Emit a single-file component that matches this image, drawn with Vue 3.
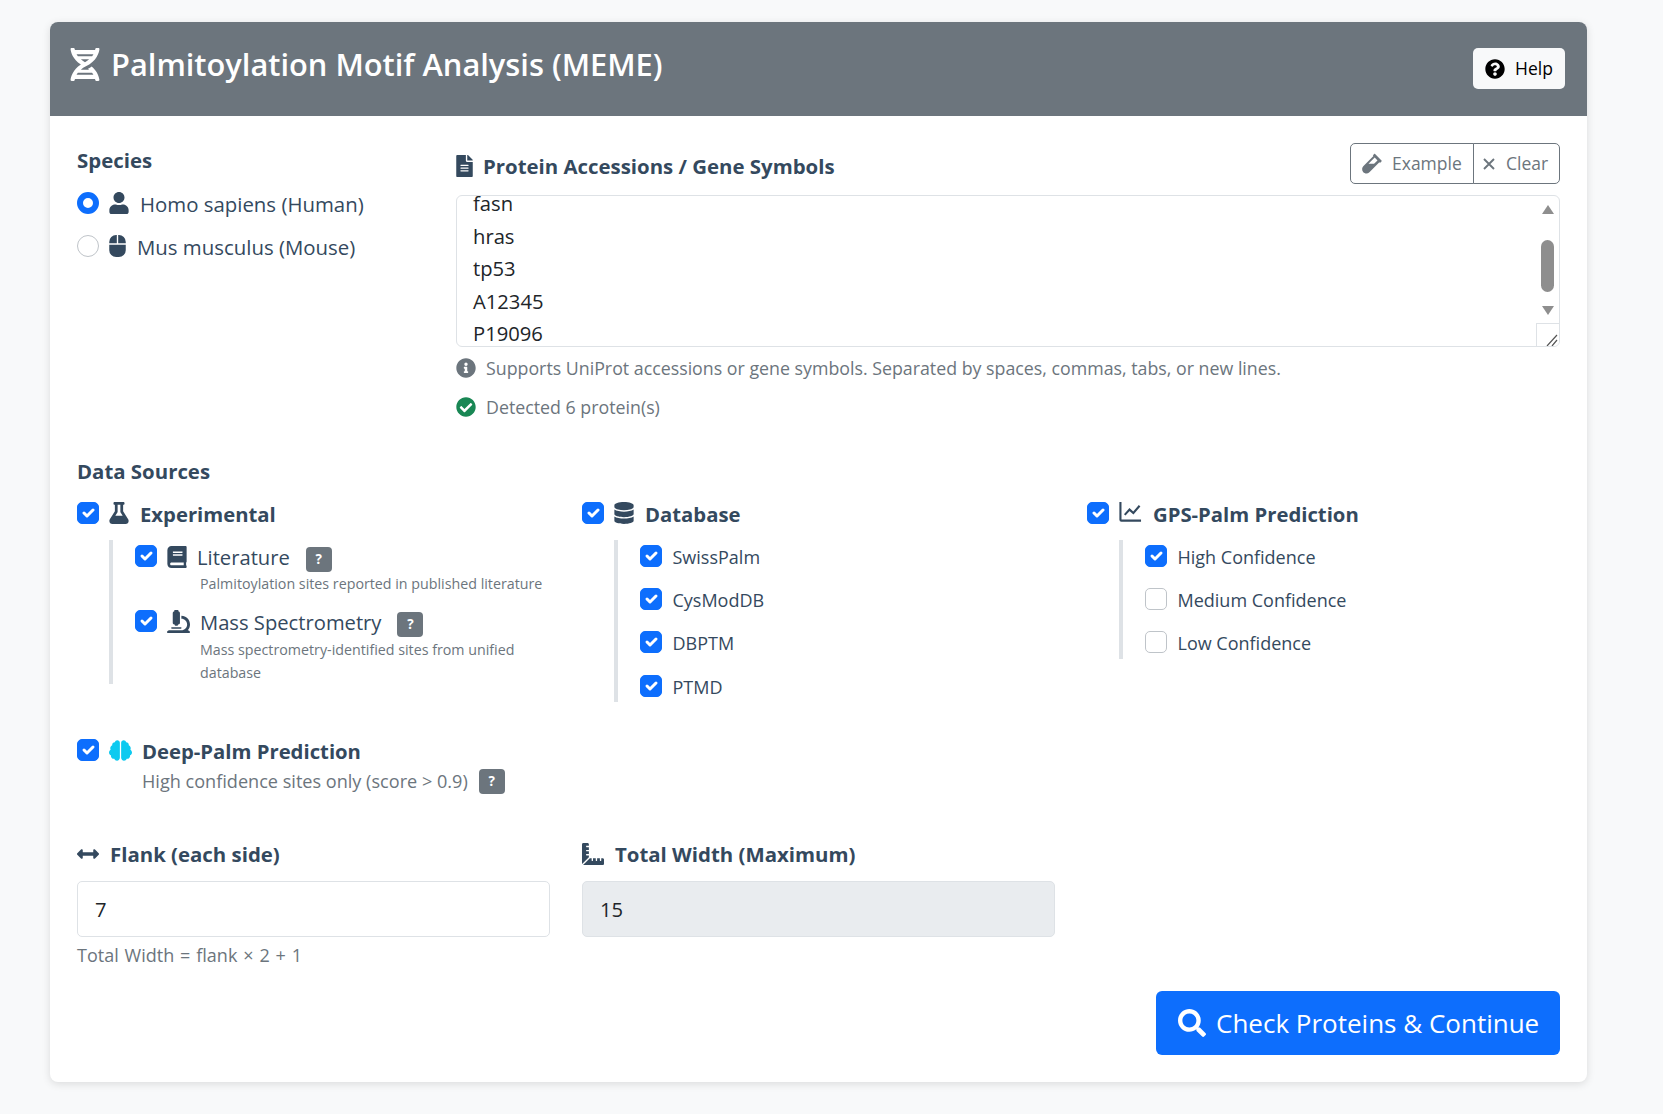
<template>
  <div class="page">
    <div class="card">
      <div class="card-header">
        <h4 class="title">
          <svg class="ic ic-dna" :viewBox="icons.dna[0]"><path :d="icons.dna[1]" /></svg>
          Palmitoylation Motif Analysis (MEME)
        </h4>
        <button class="btn-help">
          <svg class="ic ic-help" :viewBox="icons.question[0]"><path :d="icons.question[1]" /></svg>
          Help
        </button>
      </div>

      <div class="card-body">
        <div class="top-row">
          <div class="species">
            <div class="label species-label">Species</div>
            <label class="radio-row">
              <input v-model="species" type="radio" value="human" class="radio" />
              <svg class="ic ic-user" :viewBox="icons.user[0]"><path :d="icons.user[1]" /></svg>
              <span class="radio-text">Homo sapiens (Human)</span>
            </label>
            <label class="radio-row">
              <input v-model="species" type="radio" value="mouse" class="radio" />
              <svg class="ic ic-mouse" :viewBox="icons.mouse[0]"><path :d="icons.mouse[1]" /></svg>
              <span class="radio-text">Mus musculus (Mouse)</span>
            </label>
          </div>

          <div class="accessions">
            <div class="acc-head">
              <div class="label acc-label">
                <svg class="ic ic-file" :viewBox="icons.file[0]"><path :d="icons.file[1]" /></svg>
                Protein Accessions / Gene Symbols
              </div>
              <div class="btn-group">
                <button class="btn-outline btn-example">
                  <svg class="ic ic-vial" :viewBox="icons.vial[0]"><path fill-rule="evenodd" :d="icons.vial[1]" /></svg>
                  Example
                </button>
                <button class="btn-outline btn-clear" @click="accessions = ''">
                  <svg class="ic-x" viewBox="0 0 12 12"><path d="M1 1l10 10M11 1L1 11" /></svg>
                  Clear
                </button>
              </div>
            </div>
            <div class="textarea-wrap">
              <textarea ref="textareaEl" v-model="accessions" class="textarea"></textarea>
              <div class="scrollbar">
                <span class="arrow arrow-up"></span>
                <span class="thumb"></span>
                <span class="arrow arrow-down"></span>
              </div>
              <div class="resizer">
                <svg viewBox="0 0 22 22"><path d="M10 22L20 11M15 22l5-6" /></svg>
              </div>
            </div>
            <div class="hint hint-first">
              <svg class="ic ic-hint" :viewBox="icons.info[0]"><path :d="icons.info[1]" /></svg>
              Supports UniProt accessions or gene symbols. Separated by spaces, commas, tabs, or new lines.
            </div>
            <div class="hint hint-second">
              <svg class="ic ic-hint ic-ok" :viewBox="icons.checkCircle[0]"><path :d="icons.checkCircle[1]" /></svg>
              Detected {{ proteinCount }} protein(s)
            </div>
          </div>
        </div>

        <div class="label sources-label">Data Sources</div>
        <div class="sources">
          <div class="source-col">
            <label class="source-head">
              <input v-model="exp.all" type="checkbox" class="check" />
              <svg class="ic ic-flask" :viewBox="icons.flask[0]"><path :d="icons.flask[1]" /></svg>
              <span class="source-name">Experimental</span>
            </label>
            <div class="source-list exp-list">
              <div class="exp-item">
                <label class="sub-row">
                  <input v-model="exp.literature" type="checkbox" class="check" />
                  <svg class="ic ic-book" :viewBox="icons.book[0]"><path :d="icons.book[1]" /></svg>
                  <span class="exp-name">Literature</span>
                  <span class="badge badge-lit">?</span>
                </label>
                <div class="desc">Palmitoylation sites reported in published literature</div>
              </div>
              <div class="exp-item">
                <label class="sub-row">
                  <input v-model="exp.ms" type="checkbox" class="check" />
                  <svg class="ic ic-micro" :viewBox="icons.microscope[0]"><path :d="icons.microscope[1]" /></svg>
                  <span class="exp-name">Mass Spectrometry</span>
                  <span class="badge badge-ms">?</span>
                </label>
                <div class="desc">Mass spectrometry-identified sites from unified<br />database</div>
              </div>
            </div>
          </div>

          <div class="source-col">
            <label class="source-head">
              <input v-model="dbAll" type="checkbox" class="check" />
              <svg class="ic ic-db" :viewBox="icons.database[0]"><path :d="icons.database[1]" /></svg>
              <span class="source-name">Database</span>
            </label>
            <div class="source-list">
              <label v-for="item in databases" :key="item.name" class="sub-row">
                <input v-model="item.on" type="checkbox" class="check" />
                <span class="sub-name">{{ item.name }}</span>
              </label>
            </div>
          </div>

          <div class="source-col">
            <label class="source-head">
              <input v-model="gpsAll" type="checkbox" class="check" />
              <svg class="ic-chart" viewBox="0 0 24 24"><path d="M1.5 2v18.500a1 1 0 0 0 1 1H23M6 15.500l5-5.500 4 3.500L21.500 6" /></svg>
              <span class="source-name">GPS-Palm Prediction</span>
            </label>
            <div class="source-list">
              <label v-for="item in confidence" :key="item.name" class="sub-row">
                <input v-model="item.on" type="checkbox" class="check" />
                <span class="sub-name">{{ item.name }}</span>
              </label>
            </div>
          </div>
        </div>

        <label class="deep-row">
          <input v-model="deepPalm" type="checkbox" class="check" />
          <svg class="ic ic-brain" :viewBox="icons.brain[0]"><path :d="icons.brain[1]" /></svg>
          <span class="source-name">Deep-Palm Prediction</span>
        </label>
        <div class="deep-sub">
          High confidence sites only (score &gt; 0.9)
          <span class="badge badge-deep">?</span>
        </div>

        <div class="flank-row">
          <div>
            <div class="label field-label">
              <svg class="ic ic-arrows" :viewBox="icons.arrows[0]"><path :d="icons.arrows[1]" /></svg>
              Flank (each side)
            </div>
            <input v-model="flank" class="field" type="text" />
            <div class="field-help">Total Width = flank × 2 + 1</div>
          </div>
          <div>
            <div class="label field-label">
              <svg class="ic ic-ruler" :viewBox="icons.ruler[0]"><path :d="icons.ruler[1]" /></svg>
              Total Width (Maximum)
            </div>
            <input :value="flank * 2 + 1" class="field field-disabled" type="text" disabled />
          </div>
        </div>

        <div class="submit-row">
          <button class="btn-submit">
            <svg class="ic ic-search" :viewBox="icons.search[0]"><path :d="icons.search[1]" /></svg>
            Check Proteins &amp; Continue
          </button>
        </div>
      </div>
    </div>
  </div>
</template>

<script setup>
import { ref, reactive, computed, onMounted } from 'vue';

const species = ref('human');
const accessions = ref('egfr\nfasn\nhras\ntp53\nA12345\nP19096');
const textareaEl = ref(null);
const flank = ref(7);
const dbAll = ref(true);
const gpsAll = ref(true);
const deepPalm = ref(true);
const exp = reactive({ all: true, literature: true, ms: true });

const databases = reactive([
  { name: 'SwissPalm', on: true },
  { name: 'CysModDB', on: true },
  { name: 'DBPTM', on: true },
  { name: 'PTMD', on: true },
]);
const confidence = reactive([
  { name: 'High Confidence', on: true },
  { name: 'Medium Confidence', on: false },
  { name: 'Low Confidence', on: false },
]);

const proteinCount = computed(() => accessions.value.split(/[\s,]+/).filter(Boolean).length);

// the reference shows the textarea scrolled a little
onMounted(() => {
  textareaEl.value.scrollTop = 49;
});

const icons = {
  dna: ['0 0 448 512', 'M.1 494.1c-1.1 9.5 6.3 17.8 15.9 17.8l32.3.1c8.1 0 14.9-5.9 16-13.9.7-4.9 1.8-11.1 3.4-18.1H380c1.6 6.9 2.7 13.1 3.4 18.1 1.1 8 7.9 13.9 16 13.9l32.3-.1c9.6 0 17-8.3 15.9-17.8-4.6-37.9-25.6-129-118.9-207.7-17.6 12.4-37.1 24.2-58.5 35.4 6.2 4.6 11.4 9.4 17 14.2H159.7c21.3-18.1 47-35.6 78.7-51.4C410.5 199.1 442.1 65.8 447.9 17.9 449 8.4 441.6.1 432 .1L399.6 0c-8.1 0-14.9 5.9-16 13.9-.7 4.9-1.8 11.1-3.4 18.1H67.8c-1.6-7-2.7-13.1-3.4-18.1-1.1-8-7.9-13.9-16-13.9L16.1.1C6.5.1-.9 8.4.2 17.9 5.3 60.8 31.4 171.8 160 256 31.5 340.2 5.3 451.2.1 494.1zM224 219.6c-25.1-13.7-46.4-28.4-64.3-43.6h128.5c-17.8 15.2-39.1 30-64.2 43.6zM355.1 96c-5.8 10.4-12.8 21.1-21 32H114c-8.3-10.9-15.3-21.6-21-32h262.1zM92.9 416c5.8-10.4 12.8-21.1 21-32h219.4c8.3 10.9 15.4 21.6 21.2 32H92.9z'],
  question: ['0 0 512 512', 'M504 256c0 136.997-111.043 248-248 248S8 392.997 8 256C8 119.083 119.043 8 256 8s248 111.083 248 248zM262.655 90c-54.497 0-89.255 22.957-116.549 63.758-3.536 5.286-2.353 12.415 2.715 16.258l34.699 26.31c5.205 3.947 12.621 3.008 16.665-2.122 17.864-22.658 30.113-35.797 57.303-35.797 20.429 0 45.698 13.148 45.698 32.958 0 14.976-12.363 22.667-32.534 33.976C247.128 238.528 216 254.941 216 296v4c0 6.627 5.373 12 12 12h56c6.627 0 12-5.373 12-12v-1.333c0-28.462 83.186-29.647 83.186-106.667 0-58.002-60.165-102-116.531-102zM256 338c-25.365 0-46 20.635-46 46 0 25.364 20.635 46 46 46s46-20.636 46-46c0-25.365-20.635-46-46-46z'],
  user: ['0 0 448 512', 'M224 256c70.7 0 128-57.3 128-128S294.7 0 224 0 96 57.3 96 128s57.3 128 128 128zm89.6 32h-16.7c-22.2 10.2-46.9 16-72.9 16s-50.6-5.8-72.9-16h-16.7C60.2 288 0 348.2 0 422.4V464c0 26.5 21.5 48 48 48h352c26.5 0 48-21.5 48-48v-41.6c0-74.2-60.2-134.4-134.4-134.4z'],
  mouse: ['0 0 384 512', 'M0 352a160 160 0 0 0 160 160h64a160 160 0 0 0 160-160V224H0zM176 0h-16A160 160 0 0 0 0 160v32h176zm48 0h-16v192h176v-32A160 160 0 0 0 224 0z'],
  file: ['0 0 384 512', 'M224 136V0H24C10.7 0 0 10.7 0 24v464c0 13.3 10.7 24 24 24h336c13.3 0 24-10.7 24-24V160H248c-13.2 0-24-10.8-24-24zm64 236c0 6.6-5.4 12-12 12H108c-6.6 0-12-5.4-12-12v-8c0-6.6 5.4-12 12-12h168c6.6 0 12 5.4 12 12v8zm0-64c0 6.6-5.4 12-12 12H108c-6.6 0-12-5.4-12-12v-8c0-6.6 5.4-12 12-12h168c6.6 0 12 5.4 12 12v8zm0-72v8c0 6.6-5.4 12-12 12H108c-6.6 0-12-5.4-12-12v-8c0-6.6 5.4-12 12-12h168c6.6 0 12 5.4 12 12zm96-114.1v6.1H256V0h6.1c6.4 0 12.5 2.5 17 7l97.9 98c4.5 4.5 7 10.6 7 16.9z'],
  vial: ['0 0 480 512', 'M477.7 186.1L309.5 18.3c-3.1-3.1-8.2-3.1-11.3 0l-34 33.9c-3.1 3.1-3.1 8.2 0 11.3l11.2 11.1L33 316.5c-38.8 38.7-45.1 103-9.4 144.6 20.6 24.1 50.1 36.6 79.5 36.6 26.6 0 53.2-10.1 73.6-30.4l242.4-241.8 11.2 11.1c3.1 3.1 8.2 3.1 11.3 0l34-33.9c3.1-3.1 3.1-8.2 0-11.3zM306 112l68 68-84 84H154z'],
  info: ['0 0 512 512', 'M256 8C119.043 8 8 119.083 8 256c0 136.997 111.043 248 248 248s248-111.003 248-248C504 119.083 392.957 8 256 8zm0 110c23.196 0 42 18.804 42 42s-18.804 42-42 42-42-18.804-42-42 18.804-42 42-42zm56 254c0 6.627-5.373 12-12 12h-88c-6.627 0-12-5.373-12-12v-24c0-6.627 5.373-12 12-12h12v-64h-12c-6.627 0-12-5.373-12-12v-24c0-6.627 5.373-12 12-12h64c6.627 0 12 5.373 12 12v100h12c6.627 0 12 5.373 12 12v24z'],
  checkCircle: ['0 0 512 512', 'M504 256c0 136.967-111.033 248-248 248S8 392.967 8 256 119.033 8 256 8s248 111.033 248 248zM227.314 387.314l184-184c6.248-6.248 6.248-16.379 0-22.627l-22.627-22.627c-6.248-6.249-16.379-6.249-22.628 0L216 308.118l-70.059-70.059c-6.248-6.248-16.379-6.248-22.628 0l-22.627 22.627c-6.248 6.248-6.248 16.379 0 22.627l104 104c6.249 6.249 16.379 6.249 22.628.001z'],
  flask: ['0 0 448 512', 'M437.2 403.5L320 215V64h8c13.3 0 24-10.7 24-24V24c0-13.3-10.7-24-24-24H120c-13.3 0-24 10.7-24 24v16c0 13.3 10.7 24 24 24h8v151L10.8 403.5C-18.5 450.6 15.3 512 70.9 512h306.2c55.7 0 89.4-61.5 60.1-108.5zM137.9 320l48.2-77.6c3.7-5.2 5.8-11.6 5.8-18.4V64h64v160c0 6.9 2.2 13.2 5.8 18.4l48.2 77.6h-172z'],
  book: ['0 0 448 512', 'M448 360V24c0-13.3-10.7-24-24-24H96C43 0 0 43 0 96v320c0 53 43 96 96 96h328c13.3 0 24-10.7 24-24v-16c0-7.5-3.5-14.3-8.9-18.7-4.2-15.4-4.2-59.3 0-74.7 5.4-4.3 8.9-11.1 8.9-18.6zM128 134c0-3.3 2.7-6 6-6h212c3.3 0 6 2.7 6 6v20c0 3.3-2.7 6-6 6H134c-3.3 0-6-2.7-6-6v-20zm0 64c0-3.3 2.7-6 6-6h212c3.3 0 6 2.7 6 6v20c0 3.3-2.7 6-6 6H134c-3.3 0-6-2.7-6-6v-20zm253.4 250H96c-17.7 0-32-14.3-32-32 0-17.6 14.4-32 32-32h285.4c-1.9 17.1-1.9 46.9 0 64z'],
  microscope: ['0 0 512 512', 'M160 320h12v16c0 8.84 7.16 16 16 16h40c8.84 0 16-7.16 16-16v-16h12c17.67 0 32-14.33 32-32V64c0-17.67-14.33-32-32-32V16c0-8.84-7.16-16-16-16h-64c-8.84 0-16 7.16-16 16v16c-17.67 0-32 14.33-32 32v224c0 17.67 14.33 32 32 32zm304 128h-1.29C493.24 413.99 512 369.2 512 320c0-105.88-86.12-192-192-192v64c70.58 0 128 57.42 128 128s-57.42 128-128 128H48c-26.51 0-48 21.49-48 48 0 8.84 7.16 16 16 16h480c8.84 0 16-7.16 16-16 0-26.51-21.49-48-48-48zm-360-32h208c4.42 0 8-3.58 8-8v-16c0-4.42-3.58-8-8-8H104c-4.42 0-8 3.58-8 8v16c0 4.42 3.58 8 8 8z'],
  database: ['0 0 448 512', 'M448 73.143v45.714C448 159.143 347.667 192 224 192S0 159.143 0 118.857V73.143C0 32.857 100.333 0 224 0s224 32.857 224 73.143zM448 176v102.857C448 319.143 347.667 352 224 352S0 319.143 0 278.857V176c48.125 33.143 136.208 48.572 224 48.572S399.874 209.143 448 176zm0 160v102.857C448 479.143 347.667 512 224 512S0 479.143 0 438.857V336c48.125 33.143 136.208 48.572 224 48.572S399.874 369.143 448 336z'],
  brain: ['0 0 576 512', 'M208 0c-29.9 0-54.7 20.5-61.8 48.2-.8 0-1.4-.2-2.2-.2-35.3 0-64 28.7-64 64 0 4.8.6 9.5 1.7 14C52.5 138 32 166.6 32 200c0 12.6 3.2 24.3 8.3 34.9C16.3 248.7 0 274.3 0 304c0 33.3 20.4 61.9 49.4 73.9-.9 4.6-1.4 9.3-1.4 14.1 0 39.8 32.2 72 72 72 4.1 0 8.1-.5 12-1.2 9.6 28.5 36.2 49.2 68 49.2 39.8 0 72-32.2 72-72V64c0-35.3-28.7-64-64-64zm368 304c0-29.7-16.3-55.3-40.3-69.1 5.2-10.6 8.3-22.3 8.3-34.9 0-33.4-20.5-62-49.7-74 1-4.5 1.7-9.2 1.7-14 0-35.3-28.7-64-64-64-.8 0-1.5.2-2.2.2C422.7 20.5 397.9 0 368 0c-35.3 0-64 28.6-64 64v376c0 39.8 32.2 72 72 72 31.8 0 58.4-20.7 68-49.2 3.9.7 7.9 1.2 12 1.2 39.8 0 72-32.2 72-72 0-4.8-.5-9.5-1.4-14.1 29-12 49.4-40.6 49.4-73.9z'],
  arrows: ['0 0 512 512', 'M377.941 169.941V216H134.059v-46.059c0-21.382-25.851-32.09-40.971-16.971L7.029 239.029c-9.373 9.373-9.373 24.568 0 33.941l86.059 86.059c15.119 15.119 40.971 4.411 40.971-16.971V296h243.882v46.059c0 21.382 25.851 32.09 40.971 16.971l86.059-86.059c9.373-9.373 9.373-24.568 0-33.941l-86.059-86.059c-15.119-15.12-40.971-4.412-40.971 16.97z'],
  ruler: ['0 0 512 512', 'M160 288h-56c-4.42 0-8-3.58-8-8v-16c0-4.42 3.58-8 8-8h56v-64h-56c-4.42 0-8-3.58-8-8v-16c0-4.42 3.58-8 8-8h56V96h-56c-4.42 0-8-3.58-8-8V72c0-4.42 3.58-8 8-8h56V32c0-17.67-14.33-32-32-32H32C14.33 0 0 14.33 0 32v448c0 2.77.91 5.24 1.57 7.8L160 329.38V288zm320 64h-32v56c0 4.42-3.58 8-8 8h-16c-4.42 0-8-3.58-8-8v-56h-64v56c0 4.42-3.58 8-8 8h-16c-4.42 0-8-3.58-8-8v-56h-64v56c0 4.42-3.58 8-8 8h-16c-4.42 0-8-3.58-8-8v-56h-41.37L24.2 510.43c2.56.66 5.04 1.57 7.8 1.57h448c17.67 0 32-14.33 32-32v-96c0-17.67-14.33-32-32-32z'],
  search: ['0 0 512 512', 'M505 442.7L405.3 343c-4.5-4.5-10.6-7-17-7H372c27.6-35.3 44-79.7 44-128C416 93.1 322.9 0 208 0S0 93.1 0 208s93.1 208 208 208c48.3 0 92.7-16.4 128-44v16.3c0 6.4 2.5 12.5 7 17l99.7 99.7c9.4 9.4 24.6 9.4 33.9 0l28.3-28.3c9.4-9.4 9.4-24.6.1-34zM208 336c-70.7 0-128-57.2-128-128 0-70.7 57.2-128 128-128 70.7 0 128 57.2 128 128 0 70.7-57.2 128-128 128z'],
};
</script>

<style>
body {
  background: #f8f9fa;
}
</style>

<style scoped>
.page {
  box-sizing: border-box;
  min-height: 1114px;
  padding: 22px 0 0 50px;
  font-family: 'Open Sans', 'Noto Sans', sans-serif;
  font-size: 20.2px;
  line-height: 32.4px;
  color: #34495e;
}

.card {
  width: 1537px;
  background: #fff;
  border-radius: 8px;
  box-shadow: 0 2px 8px rgba(0, 0, 0, 0.12);
}

.ic {
  display: block;
  flex: none;
  fill: currentColor;
}

.card-header {
  display: flex;
  align-items: center;
  justify-content: space-between;
  height: 94px;
  padding: 0 22px 0 20px;
  background: #6c757d;
  border-radius: 8px 8px 0 0;
  color: #fff;
}

.title {
  display: flex;
  align-items: center;
  gap: 11px;
  margin: -10px 0 0;
  font-size: 30.8px;
  font-weight: 600;
  line-height: 38px;
}

.ic-dna {
  width: 30px;
  height: 33px;
}

.btn-help {
  display: flex;
  align-items: center;
  gap: 10px;
  width: 92px;
  height: 41px;
  margin-top: -1px;
  padding: 0 0 0 12px;
  border: none;
  border-radius: 5px;
  background: #f8f9fa;
  color: #000;
  font: inherit;
  font-size: 17.5px;
}

.ic-help {
  width: 20px;
  height: 20px;
}

.card-body {
  padding: 27px;
}

.label {
  font-weight: 700;
  font-size: 20.4px;
  height: 32px;
}

.top-row {
  display: flex;
}

.species {
  flex: none;
  width: 379px;
  padding-top: 1px;
}

.species-label {
  margin-bottom: 11px;
}

.radio-row {
  display: flex;
  align-items: center;
  height: 32.4px;
  margin-bottom: 10.6px;
}

.radio-text {
  padding-top: 2px;
  font-size: 20.4px;
}

.radio {
  appearance: none;
  flex: none;
  box-sizing: border-box;
  width: 22px;
  height: 22px;
  margin: 0 10px 0 0;
  border: 1px solid #bfc4c9;
  border-radius: 50%;
  background: #fff;
}

.radio:checked {
  border: 6px solid #0d6efd;
}

.ic-user {
  width: 20px;
  height: 22px;
  margin-right: 11px;
}

.ic-mouse {
  width: 17px;
  height: 22px;
  margin-right: 11px;
}

.accessions {
  flex: 1;
  min-width: 0;
}

.acc-head {
  display: flex;
  justify-content: space-between;
  align-items: flex-start;
  margin-bottom: 11px;
}

.acc-label {
  display: flex;
  align-items: center;
  gap: 10px;
  margin-top: 7px;
}

.ic-file {
  width: 17px;
  height: 22px;
}

.btn-group {
  display: flex;
  height: 41px;
}

.btn-outline {
  display: flex;
  align-items: center;
  padding: 0;
  border: 1px solid #6c757d;
  background: #fff;
  color: #6c757d;
  font: inherit;
  font-size: 17.5px;
}

.btn-example {
  gap: 10px;
  width: 124px;
  padding-left: 11px;
  border-radius: 5px 0 0 5px;
}

.btn-clear {
  gap: 11px;
  width: 87px;
  margin-left: -1px;
  padding-left: 9px;
  border-radius: 0 5px 5px 0;
}

.ic-vial {
  width: 20px;
  height: 21px;
}

.ic-x {
  display: block;
  flex: none;
  width: 12px;
  height: 12px;
  fill: none;
  stroke: currentColor;
  stroke-width: 1.9;
}

.textarea-wrap {
  position: relative;
  height: 152px;
}

.textarea {
  display: block;
  box-sizing: border-box;
  width: 100%;
  height: 152px;
  padding: 8px 16px;
  overflow: hidden;
  border: 1px solid #dee2e6;
  border-radius: 6px;
  outline: none;
  resize: none;
  color: #212529;
  font: inherit;
}

.scrollbar {
  position: absolute;
  top: 1px;
  right: 1px;
  bottom: 1px;
  width: 23px;
  border-radius: 0 5px 5px 0;
}

.thumb {
  position: absolute;
  top: 44px;
  left: 5px;
  width: 13px;
  height: 52px;
  border-radius: 7px;
  background: #8e8e8e;
}

.arrow {
  position: absolute;
  left: 5.5px;
  width: 0;
  height: 0;
  border-left: 6px solid transparent;
  border-right: 6px solid transparent;
}

.arrow-up {
  top: 9px;
  border-bottom: 9px solid #8e8e8e;
}

.arrow-down {
  top: 110px;
  border-top: 9px solid #8e8e8e;
}

.resizer {
  position: absolute;
  right: 1px;
  bottom: 1px;
  box-sizing: border-box;
  width: 23px;
  height: 23px;
  overflow: hidden;
  border-top: 1px solid #dee2e6;
  border-left: 1px solid #dee2e6;
  border-radius: 0 0 5px 0;
  background: #fff;
}

.resizer svg {
  display: block;
  width: 22px;
  height: 22px;
  fill: none;
  stroke: #555;
  stroke-width: 1.2;
}

.hint {
  display: flex;
  align-items: center;
  gap: 10px;
  height: 32px;
  color: #6c757d;
  font-size: 17.8px;
}

.hint-first {
  margin-top: 5px;
}

.hint-second {
  margin-top: 7px;
}

.ic-hint {
  width: 20px;
  height: 20px;
}

.ic-ok {
  color: #198754;
}

.sources-label {
  margin-top: 32px;
}

.sources {
  display: grid;
  grid-template-columns: repeat(3, 1fr);
  column-gap: 32px;
  margin-top: 11px;
}

.source-head,
.deep-row {
  display: flex;
  align-items: flex-start;
  height: 32px;
}

.check {
  appearance: none;
  flex: none;
  box-sizing: border-box;
  width: 22px;
  height: 22px;
  margin: 4px 10px 0 0;
  border: 1px solid #bfc4c9;
  border-radius: 5px;
  background: #fff;
}

.check:checked {
  border-color: #0d6efd;
  background: #0d6efd url("data:image/svg+xml,%3csvg xmlns='http://www.w3.org/2000/svg' viewBox='0 0 20 20'%3e%3cpath fill='none' stroke='%23fff' stroke-linecap='round' stroke-linejoin='round' stroke-width='3' d='m6 10 3 3 6-6'/%3e%3c/svg%3e") center / 100% 100% no-repeat;
}

.source-name {
  font-weight: 700;
  font-size: 20.3px;
}

.ic-flask,
.ic-db {
  width: 20px;
  height: 22px;
  margin: 4px 11px 0 0;
}

.ic-chart {
  display: block;
  flex: none;
  width: 23px;
  height: 23px;
  margin: 2px 11px 0 0;
  fill: none;
  stroke: currentColor;
  stroke-width: 2.2;
}

.source-list {
  display: flex;
  flex-direction: column;
  gap: 10.8px;
  margin: 10px 0 0 32px;
  padding-left: 22px;
  border-left: 4px solid #dee2e6;
}

.exp-list {
  gap: 10px;
}

.sub-row {
  display: flex;
  align-items: flex-start;
  height: 32.4px;
}

.sub-row .check {
  margin-top: 5px;
}

.sub-name {
  margin-left: 0.5px;
  font-size: 18px;
  padding-top: 1px;
}

.exp-name {
  padding-top: 1px;
}

.ic-book {
  width: 20px;
  height: 22px;
  margin: 6px 10px 0 0;
}

.ic-micro {
  width: 23px;
  height: 23px;
  margin: 5px 10px 0 0;
}

.badge {
  display: inline-flex;
  align-items: center;
  justify-content: center;
  box-sizing: border-box;
  width: 26px;
  height: 25px;
  border-radius: 4px;
  background: #6c757d;
  color: #fff;
  font-size: 13.5px;
  font-weight: 700;
  line-height: 1;
}

.badge-lit,
.badge-ms {
  margin: 7px 0 0 16px;
}

.badge-deep {
  margin-top: 1px;
}

.desc {
  margin-left: 65px;
  color: #6c757d;
  font-size: 14.25px;
  line-height: 23px;
}

.deep-row {
  margin-top: 33px;
}

.ic-brain {
  width: 23px;
  height: 23px;
  margin: 4px 10px 0 0;
  color: #0dcaf0;
}

.deep-sub {
  display: flex;
  align-items: center;
  gap: 11px;
  height: 32px;
  margin: -2px 0 0 65px;
  color: #6c757d;
  font-size: 18.1px;
}

.flank-row {
  display: grid;
  grid-template-columns: 473px 473px;
  column-gap: 32px;
  margin-top: 41px;
}

.field-label {
  display: flex;
  align-items: center;
  gap: 11px;
}

.ic-arrows {
  width: 22px;
  height: 22px;
}

.ic-ruler {
  width: 22px;
  height: 22px;
}

.field {
  display: block;
  box-sizing: border-box;
  width: 100%;
  height: 56px;
  margin-top: 11px;
  padding: 0 17px;
  border: 1px solid #dee2e6;
  border-radius: 5px;
  outline: none;
  background: #fff;
  color: #212529;
  font: inherit;
}

.field-disabled {
  background: #e9ecef;
  opacity: 1;
}

.field-help {
  height: 33px;
  margin-top: 2px;
  color: #6c757d;
  font-size: 18px;
  word-spacing: 1.2px;
}

.submit-row {
  display: flex;
  justify-content: flex-end;
  margin-top: 19px;
}

.btn-submit {
  display: flex;
  align-items: center;
  gap: 10px;
  width: 404px;
  height: 64px;
  padding: 0 0 0 22px;
  border: none;
  border-radius: 6px;
  background: #0d6efd;
  color: #fff;
  font: inherit;
  font-size: 26px;
}

.ic-search {
  width: 28px;
  height: 28px;
}
</style>
